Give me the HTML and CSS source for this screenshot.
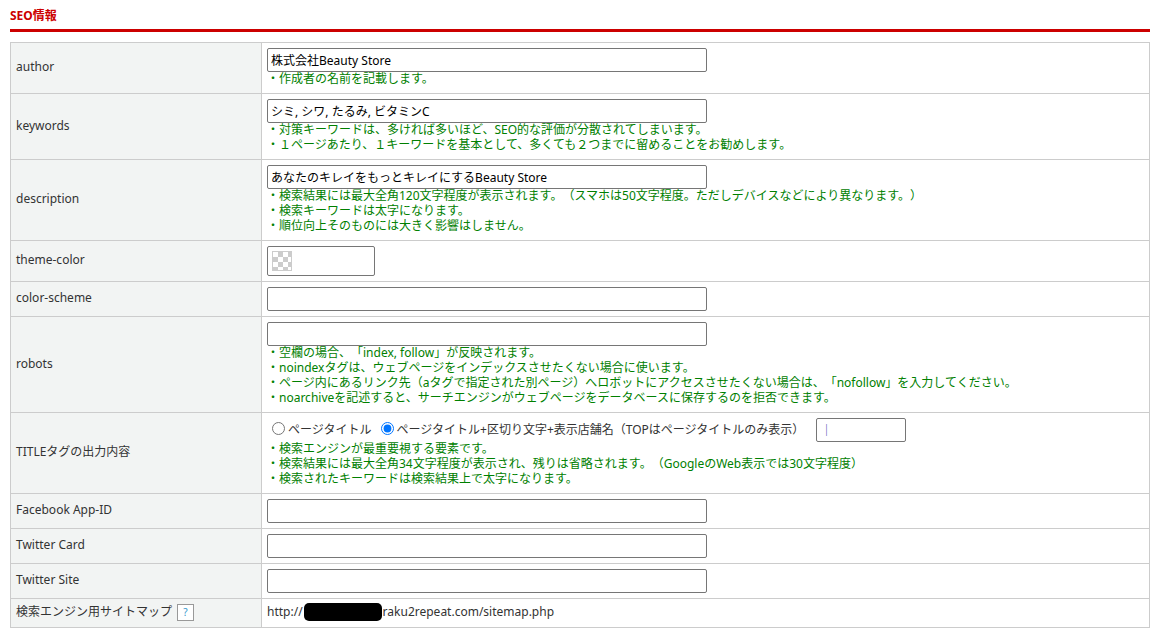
FILE: index.html
```html
<!DOCTYPE html>
<html lang="ja">
<head>
<meta charset="utf-8">
<title>SEO情報</title>
<link rel="stylesheet" href="styles.css">
</head>
<body>
<h2 class="section-title">SEO情報</h2>
<table class="form-table">
<tbody>
<tr>
<th scope="row"><label for="author">author</label></th>
<td><input class="field" id="author" type="text" value="株式会社Beauty Store">
<p class="notes">・作成者の名前を記載します。</p></td>
</tr>
<tr>
<th scope="row"><label for="keywords">keywords</label></th>
<td><input class="field" id="keywords" type="text" value="シミ, シワ, たるみ, ビタミンC">
<p class="notes">・対策キーワードは、多ければ多いほど、SEO的な評価が分散されてしまいます。<br>・１ページあたり、１キーワードを基本として、多くても２つまでに留めることをお勧めします。</p></td>
</tr>
<tr>
<th scope="row"><label for="description">description</label></th>
<td><input class="field" id="description" type="text" value="あなたのキレイをもっとキレイにするBeauty Store">
<p class="notes">・検索結果には最大全角120文字程度が表示されます。（スマホは50文字程度。ただしデバイスなどにより異なります。）<br>・検索キーワードは太字になります。<br>・順位向上そのものには大きく影響はしません。</p></td>
</tr>
<tr>
<th scope="row"><label for="theme-color">theme-color</label></th>
<td><div class="color-field">
<svg class="swatch" width="20" height="20" viewBox="0 0 20 20" aria-hidden="true"><path fill="#ccc" d="M0 0h20v20H0z"/><path fill="#fff" d="M1 1h5v5H1zM11 1h5v5h-5zM6 6h5v5H6zM16 6h3v5h-3zM1 11h5v5H1zM11 11h5v5h-5zM6 16h5v3H6zM16 16h3v3h-3z"/></svg>
<input class="color-value" id="theme-color" type="text">
</div></td>
</tr>
<tr>
<th scope="row"><label for="color-scheme">color-scheme</label></th>
<td><input class="field" id="color-scheme" type="text"></td>
</tr>
<tr>
<th scope="row"><label for="robots">robots</label></th>
<td><input class="field" id="robots" type="text">
<p class="notes">・空欄の場合、「index, follow」が反映されます。<br>・noindexタグは、ウェブページをインデックスさせたくない場合に使います。<br>・ページ内にあるリンク先（aタグで指定された別ページ）へロボットにアクセスさせたくない場合は、「nofollow」を入力してください。<br>・noarchiveを記述すると、サーチエンジンがウェブページをデータベースに保存するのを拒否できます。</p></td>
</tr>
<tr>
<th scope="row">TITLEタグの出力内容</th>
<td><div class="title-options">
<label class="option"><input class="radio" type="radio" name="title-format">ページタイトル</label>
<label class="option"><input class="radio" type="radio" name="title-format" checked>ページタイトル+区切り文字+表示店舗名（TOPはページタイトルのみ表示）</label>
<input class="field separator" type="text" value="｜" aria-label="区切り文字">
</div>
<p class="notes">・検索エンジンが最重要視する要素です。<br>・検索結果には最大全角34文字程度が表示され、残りは省略されます。（GoogleのWeb表示では30文字程度）<br>・検索されたキーワードは検索結果上で太字になります。</p></td>
</tr>
<tr>
<th scope="row"><label for="fb">Facebook App-ID</label></th>
<td><input class="field" id="fb" type="text"></td>
</tr>
<tr>
<th scope="row"><label for="tw-card">Twitter Card</label></th>
<td><input class="field" id="tw-card" type="text"></td>
</tr>
<tr>
<th scope="row"><label for="tw-site">Twitter Site</label></th>
<td><input class="field" id="tw-site" type="text"></td>
</tr>
<tr>
<th scope="row"><div class="with-help">検索エンジン用サイトマップ<button class="help" type="button">?</button></div></th>
<td class="text-cell"><div class="url">http://<span class="mask"></span>raku2repeat.com/sitemap.php</div></td>
</tr>
</tbody>
</table>
</body>
</html>
```
FILE: styles.css
```css
* {
  box-sizing: border-box;
}

body {
  margin: 8px 10px 10px;
  background: #fff;
  color: #333;
  font: 12px/16px "Noto Sans", "Noto Sans CJK JP", sans-serif;
  text-spacing-trim: space-all;
}

.section-title {
  margin: 0 0 10px;
  padding-bottom: 5px;
  border-bottom: 3px solid #c00;
  color: #c00;
  font-size: 12px;
  line-height: 16px;
}

.form-table {
  width: 100%;
  table-layout: fixed;
  border-collapse: collapse;
}

.form-table th,
.form-table td {
  padding: 5px;
  border: 1px solid #ccc;
  vertical-align: middle;
  text-align: left;
  font-weight: normal;
}

.form-table th,
.form-table .text-cell {
  padding: 4px 5px 6px;
}

.form-table th {
  width: 251px;
  background: #f2f4f3;
}

.field,
.color-field {
  display: block;
  width: 440px;
  max-width: 100%;
  height: 24px;
  padding: 0 3px 1px;
  border: 1px solid #767676;
  border-radius: 2px;
  background: #fff;
  color: #000;
  font: inherit;
}

.notes {
  margin: -1px 0 1px;
  padding-bottom: 1px;
  color: #008000;
  line-height: 15px;
}

.color-field {
  display: flex;
  align-items: center;
  gap: 4px;
  width: 108px;
  height: 30px;
  padding: 0 4px;
}

.swatch {
  flex: none;
}

.color-value {
  flex: 1;
  min-width: 0;
  padding: 0;
  border: 0;
  outline: 0;
  font: inherit;
}

.title-options {
  display: flex;
  align-items: center;
  gap: 4px;
}

.option {
  display: flex;
  align-items: center;
}

.radio {
  width: 13px;
  height: 13px;
  margin: 0 3px 3px 5px;
}

.separator {
  width: 90px;
  margin-left: 8px;
  color: #4040b0;
}

.with-help,
.url {
  display: flex;
  align-items: center;
}

.help {
  width: 17px;
  height: 17px;
  margin-left: 5px;
  padding: 0;
  border: 1px solid #999;
  background: #fff;
  color: #39c;
  font: 10px/14px "Noto Sans", sans-serif;
}

.mask {
  width: 78px;
  height: 18px;
  margin: 0 1px;
  border-radius: 5px;
  background: #000;
}
```
